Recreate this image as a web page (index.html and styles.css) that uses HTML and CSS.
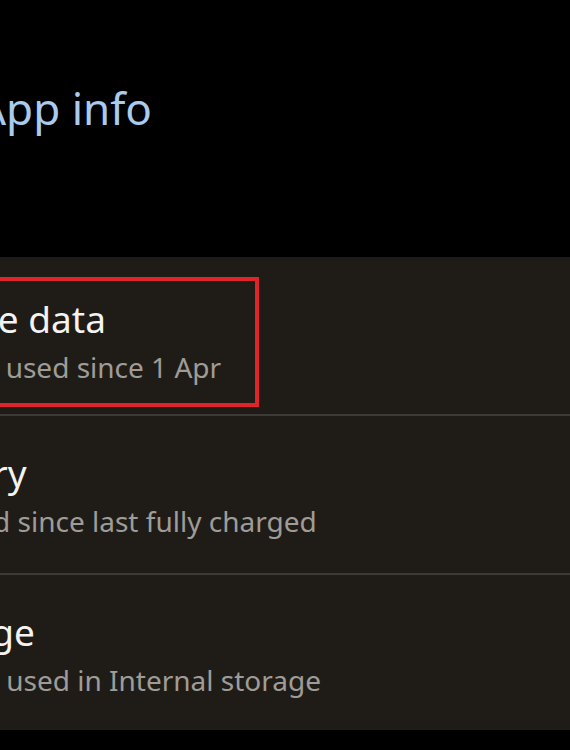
FILE: index.html
```html
<!DOCTYPE html>
<html lang="en">
<head>
<meta charset="utf-8">
<title>App info</title>
<link rel="stylesheet" href="styles.css">
</head>
<body>
<div class="screen">
  <header class="header">
    <h1 class="page-title">App info</h1>
  </header>
  <section class="card">
    <div class="row row-first">
      <div class="row-text">
        <div class="row-title">Mobile data</div>
        <div class="row-sub">21.3 KB used since 1 Apr</div>
      </div>
      <div class="highlight"></div>
    </div>
    <div class="divider"></div>
    <div class="row">
      <div class="row-text">
        <div class="row-title">Battery</div>
        <div class="row-sub">0% used since last fully charged</div>
      </div>
    </div>
    <div class="divider"></div>
    <div class="row">
      <div class="row-text">
        <div class="row-title">Storage</div>
        <div class="row-sub">103 MB used in Internal storage</div>
      </div>
    </div>
  </section>
</div>
</body>
</html>
```

FILE: styles.css
```css
html, body {
  margin: 0;
  padding: 0;
  background: #000;
}
body {
  width: 570px;
  height: 750px;
  overflow: hidden;
  font-family: "Noto Sans", "Open Sans", sans-serif;
}
.screen {
  display: flex;
  flex-direction: column;
}
.header {
  height: 257px;
  box-sizing: border-box;
  padding-top: 82px;
}
.page-title {
  margin: 0 0 0 -22px;
  font-size: 44px;
  line-height: 52px;
  font-weight: 400;
  color: #a8cbee;
  white-space: nowrap;
}
.card {
  background: #1f1c18;
  display: flex;
  flex-direction: column;
}
.row {
  position: relative;
  padding: 35px 0 32px;
}
.row-first {
  padding: 40px 0 27px;
}
.row:last-child {
  padding-bottom: 30px;
}
.row-text {
  margin-left: -100px;
  white-space: nowrap;
}
.row-title {
  font-size: 37px;
  line-height: 44px;
  color: #f4f3f1;
}
.row-sub {
  margin-top: 6px;
  font-size: 28px;
  line-height: 40px;
  color: #9f9c98;
}
.divider {
  height: 2px;
  background: #3c3a37;
}
.highlight {
  position: absolute;
  left: -10px;
  top: 20px;
  width: 269px;
  height: 130px;
  box-sizing: border-box;
  border: 4px solid #e1232c;
}
```
